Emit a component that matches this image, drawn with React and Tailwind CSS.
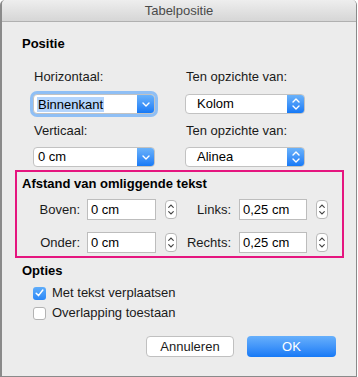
const font = { fontFamily: '"Liberation Sans", Arial, sans-serif' }

function Chevron({ dir = 'down', color = 'white' }) {
  const d = dir === 'down' ? 'M1 1l3 3 3-3' : 'M1 4l3-3 3 3'
  return (
    <svg width="8" height="5" viewBox="0 0 8 5" fill="none">
      <path d={d} stroke={color} strokeWidth="1.4" strokeLinecap="round" strokeLinejoin="round" />
    </svg>
  )
}

function PullDown({ value, focused }) {
  return (
    <div
      className={
        'w-[122px] h-[20px] flex bg-white rounded-[4px] border border-[#c2c2c2] overflow-hidden ' +
        (focused ? 'shadow-[0_0_0_3px_#8fbff5]' : '')
      }
    >
      <div className="flex-1 flex items-center pl-[3px] text-[13px] text-black">
        <span className={focused ? 'bg-[#b3d4fc] px-[1px] leading-[15px]' : 'pl-[1px]'}>{value}</span>
      </div>
      <div className="w-[17px] flex items-center justify-center bg-gradient-to-b from-[#6ab2fa] to-[#1479f6]">
        <Chevron dir="down" />
      </div>
    </div>
  )
}

function PopUp({ value }) {
  return (
    <div className="w-[120px] h-[20px] flex bg-white rounded-[4px] border border-[#c2c2c2] overflow-hidden">
      <div className="flex-1 flex items-center pl-[11px] text-[13px] text-black">{value}</div>
      <div className="w-[17px] flex flex-col items-center justify-center gap-[2px] bg-gradient-to-b from-[#6ab2fa] to-[#1479f6]">
        <Chevron dir="up" />
        <Chevron dir="down" />
      </div>
    </div>
  )
}

function Stepper() {
  return (
    <div className="w-[12px] h-[19px] bg-white border border-[#b9b9b9] rounded-[4px] flex flex-col items-center justify-center gap-[3px]">
      <svg width="6" height="4" viewBox="0 0 6 4" fill="none">
        <path d="M0.7 3.3L3 1l2.3 2.3" stroke="#444" strokeWidth="1.1" strokeLinecap="round" />
      </svg>
      <svg width="6" height="4" viewBox="0 0 6 4" fill="none">
        <path d="M0.7 0.7L3 3l2.3-2.3" stroke="#444" strokeWidth="1.1" strokeLinecap="round" />
      </svg>
    </div>
  )
}

function Field({ value, w }) {
  return (
    <div className={'h-[21px] bg-white border border-[#bdbdbd] flex items-center pl-[3px] text-[13px] text-black ' + w}>
      {value}
    </div>
  )
}

function Checkbox({ checked, label }) {
  return (
    <div className="flex items-center h-[16px] ml-[31px]">
      {checked ? (
        <div className="w-[13px] h-[13px] rounded-[3px] bg-gradient-to-b from-[#5fadfa] to-[#2a87f7] flex items-center justify-center">
          <svg width="9" height="8" viewBox="0 0 9 8" fill="none">
            <path d="M1.2 4.2l2.3 2.4L7.8 1" stroke="white" strokeWidth="1.5" strokeLinecap="round" strokeLinejoin="round" />
          </svg>
        </div>
      ) : (
        <div className="w-[13px] h-[13px] rounded-[3px] bg-white border border-[#b3b3b3]" />
      )}
      <span className="ml-[6px] text-[13px] text-[#1a1a1a]">{label}</span>
    </div>
  )
}

export default function App() {
  return (
    <div className="w-[358px] h-[377px] bg-white" style={font}>
      <div className="w-[357px] h-[377px] bg-[#ececec] border-l-2 border-r border-b border-[#8a8a8a] rounded-t-[5px] flex flex-col overflow-hidden">
        <div className="h-[22px] shrink-0 bg-gradient-to-b from-[#eeeeee] to-[#d6d6d6] border-b border-[#b0b0b0] flex items-center justify-center text-[13px] text-[#4a4a4a]">
          Tabelpositie
        </div>

        <div className="mt-[14px] ml-[20px] text-[13px] leading-[16px] font-bold text-black">Positie</div>

        <div className="flex ml-[31px] mt-[17px]">
          <div className="w-[152px] flex flex-col">
            <div className="text-[13px] leading-[16px] text-[#1a1a1a] pl-[1px]">Horizontaal:</div>
            <div className="mt-[9px]">
              <PullDown value="Binnenkant" focused />
            </div>
            <div className="mt-[9px] text-[13px] leading-[16px] text-[#1a1a1a] pl-[1px]">Verticaal:</div>
            <div className="mt-[8px]">
              <PullDown value="0 cm" />
            </div>
          </div>
          <div className="flex flex-col">
            <div className="text-[13px] leading-[16px] text-[#1a1a1a] pl-[1px]">Ten opzichte van:</div>
            <div className="mt-[9px]">
              <PopUp value="Kolom" />
            </div>
            <div className="mt-[9px] text-[13px] leading-[16px] text-[#1a1a1a] pl-[1px]">Ten opzichte van:</div>
            <div className="mt-[8px]">
              <PopUp value="Alinea" />
            </div>
          </div>
        </div>

        <div className="mt-[3px] ml-[13px] w-[329px] h-[88px] border-2 border-[#e5157f] pt-[4px] pl-[5px]">
          <div className="text-[13px] leading-[16px] font-bold text-black">Afstand van omliggende tekst</div>
          <div className="mt-[7px] flex items-center -ml-[5px]">
            <div className="w-[63px] text-right text-[13px] text-[#1a1a1a]">Boven:</div>
            <div className="ml-[7px]"><Field value="0 cm" w="w-[69px]" /></div>
            <div className="ml-[9px]"><Stepper /></div>
            <div className="w-[54px] text-right text-[13px] text-[#1a1a1a]">Links:</div>
            <div className="ml-[8px]"><Field value="0,25 cm" w="w-[68px]" /></div>
            <div className="ml-[9px]"><Stepper /></div>
          </div>
          <div className="mt-[12px] flex items-center -ml-[5px]">
            <div className="w-[63px] text-right text-[13px] text-[#1a1a1a]">Onder:</div>
            <div className="ml-[7px]"><Field value="0 cm" w="w-[69px]" /></div>
            <div className="ml-[9px]"><Stepper /></div>
            <div className="w-[54px] text-right text-[13px] text-[#1a1a1a]">Rechts:</div>
            <div className="ml-[8px]"><Field value="0,25 cm" w="w-[68px]" /></div>
            <div className="ml-[9px]"><Stepper /></div>
          </div>
        </div>

        <div className="mt-[5px] ml-[20px] text-[13px] leading-[16px] font-bold text-black">Opties</div>
        <div className="mt-[6px]">
          <Checkbox checked label="Met tekst verplaatsen" />
        </div>
        <div className="mt-[4px]">
          <Checkbox label="Overlapping toestaan" />
        </div>

        <div className="mt-[15px] flex ml-[144px] gap-[13px]">
          <button className="w-[88px] h-[21px] bg-white border border-[#c0c0c0] rounded-[4px] text-[13px] text-[#1a1a1a] flex items-center justify-center">
            Annuleren
          </button>
          <button className="w-[89px] h-[21px] rounded-[4px] bg-gradient-to-b from-[#67b0fb] to-[#1479f6] text-[13px] text-white flex items-center justify-center">
            OK
          </button>
        </div>
      </div>
    </div>
  )
}
